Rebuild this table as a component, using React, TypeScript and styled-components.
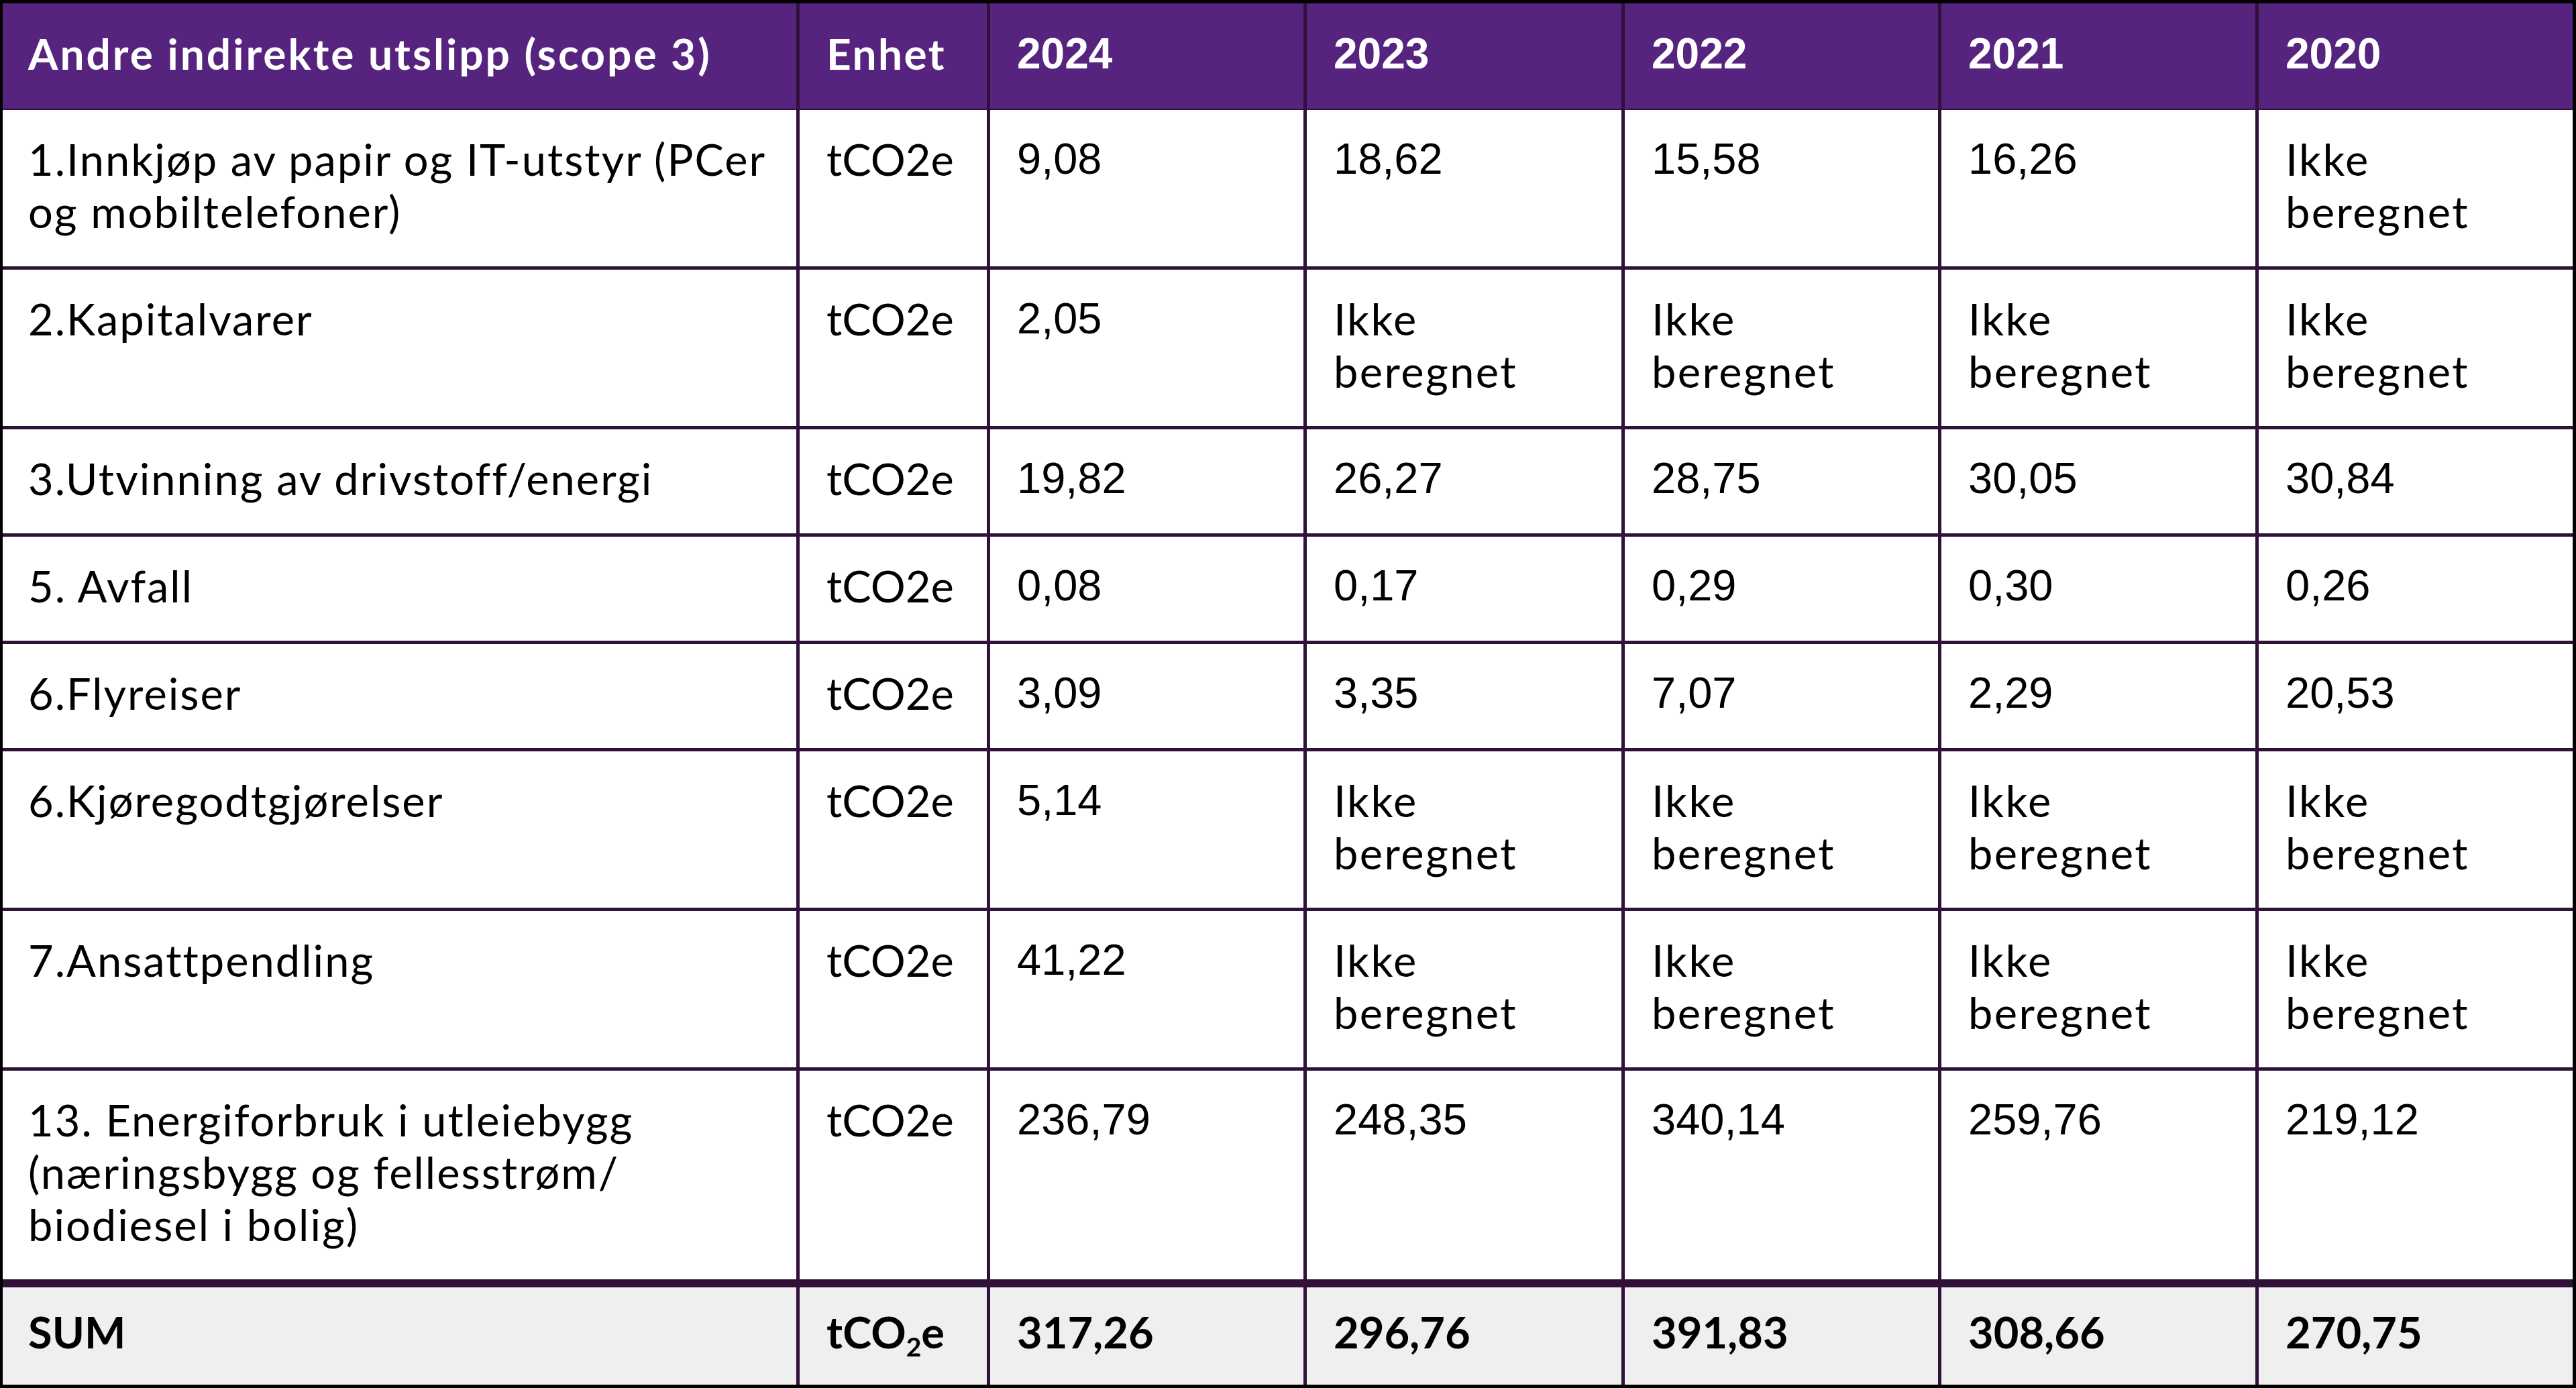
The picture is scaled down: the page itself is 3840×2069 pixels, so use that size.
import React from 'react'
import styled, { createGlobalStyle } from 'styled-components'

const GlobalStyle = createGlobalStyle`
  html, body {
    margin: 0;
    padding: 0;
    background: #ffffff;
  }
`

const LINE = '#31103a'
const TEXT_FONT = `Lato, 'Noto Sans', sans-serif`
const NUM_FONT = `'Liberation Sans', Arial, sans-serif`

const Frame = styled.div`
  box-sizing: border-box;
  width: 3840px;
  border-top: 5px solid #000;
  border-left: 4px solid #000;
  border-right: 5px solid #000;
  border-bottom: 5px solid #000;
  background: #fff;
`

const Row = styled.div<{ $line: number; $bg: string }>`
  display: grid;
  grid-template-columns: 1188px 284px 472px 474px 472px 473px 1fr;
  border-bottom: ${p => p.$line}px solid ${LINE};
  background: ${p => p.$bg};
`

const Cell = styled.div<{
  $num?: boolean
  $last?: boolean
  $bold?: boolean
  $spacing?: number
  $pad: string
}>`
  box-sizing: border-box;
  padding: ${p => p.$pad};
  border-right: ${p => (p.$last ? 'none' : `5px solid ${LINE}`)};
  font-family: ${p => (p.$num ? NUM_FONT : TEXT_FONT)};
  font-weight: ${p => (p.$bold ? 700 : 400)};
  font-size: 65px;
  line-height: 78px;
  letter-spacing: ${p => p.$spacing ?? 0}px;
  color: #000;
  white-space: pre-line;
`

const HeadCell = styled(Cell)`
  color: #fff;
  font-size: 64px;
`

const Sub = styled.span`
  font-size: 0.6em;
  vertical-align: -0.3em;
  line-height: 0;
`

const IB = 'Ikke\nberegnet'

const rows: { label: string; values: string[] }[] = [
  {
    label: '1.Innkjøp av papir og IT-utstyr (PCer\nog mobiltelefoner)',
    values: ['9,08', '18,62', '15,58', '16,26', IB],
  },
  { label: '2.Kapitalvarer', values: ['2,05', IB, IB, IB, IB] },
  {
    label: '3.Utvinning av drivstoff/energi',
    values: ['19,82', '26,27', '28,75', '30,05', '30,84'],
  },
  { label: '5. Avfall', values: ['0,08', '0,17', '0,29', '0,30', '0,26'] },
  { label: '6.Flyreiser', values: ['3,09', '3,35', '7,07', '2,29', '20,53'] },
  { label: '6.Kjøregodtgjørelser', values: ['5,14', IB, IB, IB, IB] },
  { label: '7.Ansattpendling', values: ['41,22', IB, IB, IB, IB] },
  {
    label:
      '13. Energiforbruk i utleiebygg\n(næringsbygg og fellesstrøm/\nbiodiesel i bolig)',
    values: ['236,79', '248,35', '340,14', '259,76', '219,12'],
  },
]

const years = ['2024', '2023', '2022', '2021', '2020']
const sums = ['317,26', '296,76', '391,83', '308,66', '270,75']

export default function App() {
  return (
    <>
      <GlobalStyle />
      <Frame>
        <Row $line={2} $bg="#56247e">
          <HeadCell $bold $spacing={3} $pad="36px 10px 43px 38px">
            Andre indirekte utslipp (scope 3)
          </HeadCell>
          <HeadCell $bold $spacing={2.4} $pad="36px 10px 43px 40px">
            Enhet
          </HeadCell>
          {years.map((y, i) => (
            <HeadCell
              key={y}
              $num
              $bold
              $last={i === years.length - 1}
              $pad="36px 20px 43px 40px"
            >
              {y}
            </HeadCell>
          ))}
        </Row>

        {rows.map((r, idx) => (
          <Row
            key={r.label}
            $line={idx === rows.length - 1 ? 12 : 5}
            $bg="#ffffff"
          >
            <Cell $spacing={2} $pad="34px 10px 43px 38px">
              {r.label}
            </Cell>
            <Cell $pad="34px 10px 43px 40px">tCO2e</Cell>
            {r.values.map((v, i) => (
              <Cell
                key={i}
                $num={v !== IB}
                $spacing={v === IB ? 2.4 : 0}
                $last={i === r.values.length - 1}
                $pad="34px 20px 43px 40px"
              >
                {v}
              </Cell>
            ))}
          </Row>
        ))}

        <Row $line={0} $bg="#efefef">
          <Cell $bold $pad="27px 20px 40px 38px">
            SUM
          </Cell>
          <Cell $bold $pad="27px 10px 40px 40px">
            tCO<Sub>2</Sub>e
          </Cell>
          {sums.map((s, i) => (
            <Cell
              key={s}
              $bold
              $last={i === sums.length - 1}
              $pad="27px 20px 40px 40px"
            >
              {s}
            </Cell>
          ))}
        </Row>
      </Frame>
    </>
  )
}
